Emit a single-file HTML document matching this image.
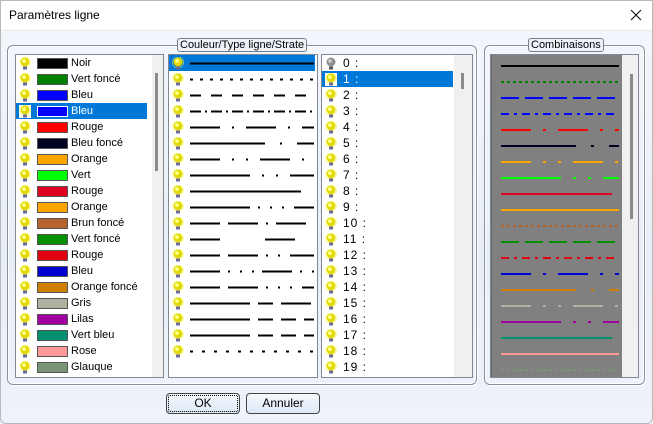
<!DOCTYPE html>
<html><head><meta charset="utf-8"><style>
*{margin:0;padding:0;box-sizing:border-box}
body{width:653px;height:424px;overflow:hidden;font-family:"Liberation Sans",sans-serif;font-size:11px;position:relative;background:linear-gradient(#f4f7fc 0,#e8eef8 60%,#eef2fa 100%)}
.abs{position:absolute}
#title{left:0;top:0;width:653px;height:31px;background:#fff;border-bottom:1px solid #e8e8e8}
.grp{border:1px solid #8a8f99;border-radius:6px;box-shadow:inset 0 0 0 1px #fff, 1px 1px 0 #fff}
.leg{background:#eef2fa;border:1px solid #7a7f88;border-radius:3px;padding:0 2px;height:14px;line-height:12px;font-size:11px;color:#000}
.list{background:#fff;border:1px solid #828790;overflow:hidden}
.sb{background:#f0f0f0}
.thumb{background:#8a8a8a;width:3px}
.row{position:absolute;left:0;height:16px;line-height:16px;white-space:nowrap}
.sel{background:#0078d7;color:#fff}
.sw{position:absolute;top:3px;width:31px;height:11px;border:1px solid #555}
.btn{border:1px solid #444;border-radius:4px;background:linear-gradient(#f6f9fd,#dde8f5);text-align:center;line-height:19px;font-size:12px}
.n{font-size:12px;letter-spacing:1px}
</style></head><body>
<svg width="0" height="0" style="position:absolute"><defs>
<g id="b"><circle cx="6" cy="5.5" r="5.5" fill="none" stroke="#ffff40" stroke-width="1" stroke-dasharray="1 1"/><circle cx="6" cy="5" r="4.5" fill="#e0d800"/><circle cx="5" cy="4" r="2" fill="#ffff80"/><rect x="4" y="9.5" width="4" height="3" fill="#6a6a9a"/></g>
<g id="g"><circle cx="6" cy="5" r="4.5" fill="#909090"/><circle cx="5" cy="4" r="1.8" fill="#d0d0d0"/><rect x="4" y="9.5" width="4" height="3" fill="#555"/></g>
</defs></svg>
<div id="title" class="abs"><div class="abs" style="left:9px;top:8px;font-size:12px">Paramètres ligne</div>
<svg class="abs" style="left:630px;top:9px" width="12" height="12"><path d="M1 1L11 11M11 1L1 11" stroke="#222" stroke-width="1.2"/></svg></div>
<div class="abs" style="left:0;top:0;width:653px;height:424px;border:1px solid #b8b8b8;border-radius:0 0 6px 6px;pointer-events:none"></div>

<div class="abs grp" style="left:7px;top:45px;width:470px;height:340px"></div>
<div class="abs leg" style="left:177px;top:38px">Couleur/Type ligne/Strate</div>
<div class="abs grp" style="left:484px;top:45px;width:161px;height:340px"></div>
<div class="abs leg" style="left:528px;top:38px">Combinaisons</div>

<div class="abs list" style="left:15px;top:54px;width:149px;height:324px">
<div class="abs sb" style="left:136px;top:0;width:12px;height:322px"><div class="abs thumb" style="left:3px;top:18px;height:98px"></div></div>
</div>
<div class="abs list" style="left:168px;top:54px;width:150px;height:324px"></div>
<div class="abs list" style="left:321px;top:54px;width:152px;height:324px">
<div class="abs sb" style="left:132px;top:0;width:18px;height:322px"><div class="abs thumb" style="left:7px;top:18px;height:16px"></div></div>
</div>
<div class="abs list" style="left:490px;top:54px;width:149px;height:324px;background:#f0f0f0">
<div class="abs" style="left:0;top:0;width:131px;height:322px;background:#808080;border-left:1px solid #666"></div>
<div class="abs thumb" style="left:139px;top:19px;height:145px"></div>
<svg id="cs" class="abs" style="left:0;top:0" width="131" height="322"></svg>
</div>

<div class="abs btn" style="left:166px;top:393px;width:74px;height:21px;outline:1px dotted #000;outline-offset:-3px">OK</div>
<div class="abs btn" style="left:246px;top:393px;width:74px;height:21px">Annuler</div>

<div class="abs" style="left:16px;top:55px;width:136px;height:322px;overflow:hidden">
<div class="row" style="top:0px;width:131px"><svg class="abs" style="left:3px;top:2px" width="12" height="13"><use href="#b"/></svg><span class="sw" style="left:21px;background:#000"></span><span class="abs" style="left:55px">Noir</span></div>
<div class="row" style="top:16px;width:131px"><svg class="abs" style="left:3px;top:2px" width="12" height="13"><use href="#b"/></svg><span class="sw" style="left:21px;background:#008000"></span><span class="abs" style="left:55px">Vert foncé</span></div>
<div class="row" style="top:32px;width:131px"><svg class="abs" style="left:3px;top:2px" width="12" height="13"><use href="#b"/></svg><span class="sw" style="left:21px;background:#0000ff"></span><span class="abs" style="left:55px">Bleu</span></div>
<div class="row sel" style="top:48px;width:131px"><svg class="abs" style="left:3px;top:2px;background:#fff" width="12" height="13"><use href="#b"/></svg><span class="sw" style="left:21px;background:#0000ff;border-color:#fff"></span><span class="abs" style="left:55px">Bleu</span></div>
<div class="row" style="top:64px;width:131px"><svg class="abs" style="left:3px;top:2px" width="12" height="13"><use href="#b"/></svg><span class="sw" style="left:21px;background:#ff0000"></span><span class="abs" style="left:55px">Rouge</span></div>
<div class="row" style="top:80px;width:131px"><svg class="abs" style="left:3px;top:2px" width="12" height="13"><use href="#b"/></svg><span class="sw" style="left:21px;background:#000020"></span><span class="abs" style="left:55px">Bleu foncé</span></div>
<div class="row" style="top:96px;width:131px"><svg class="abs" style="left:3px;top:2px" width="12" height="13"><use href="#b"/></svg><span class="sw" style="left:21px;background:#ffa500"></span><span class="abs" style="left:55px">Orange</span></div>
<div class="row" style="top:112px;width:131px"><svg class="abs" style="left:3px;top:2px" width="12" height="13"><use href="#b"/></svg><span class="sw" style="left:21px;background:#00ff00"></span><span class="abs" style="left:55px">Vert</span></div>
<div class="row" style="top:128px;width:131px"><svg class="abs" style="left:3px;top:2px" width="12" height="13"><use href="#b"/></svg><span class="sw" style="left:21px;background:#e00020"></span><span class="abs" style="left:55px">Rouge</span></div>
<div class="row" style="top:144px;width:131px"><svg class="abs" style="left:3px;top:2px" width="12" height="13"><use href="#b"/></svg><span class="sw" style="left:21px;background:#ffa500"></span><span class="abs" style="left:55px">Orange</span></div>
<div class="row" style="top:160px;width:131px"><svg class="abs" style="left:3px;top:2px" width="12" height="13"><use href="#b"/></svg><span class="sw" style="left:21px;background:#b4642c"></span><span class="abs" style="left:55px">Brun foncé</span></div>
<div class="row" style="top:176px;width:131px"><svg class="abs" style="left:3px;top:2px" width="12" height="13"><use href="#b"/></svg><span class="sw" style="left:21px;background:#009000"></span><span class="abs" style="left:55px">Vert foncé</span></div>
<div class="row" style="top:192px;width:131px"><svg class="abs" style="left:3px;top:2px" width="12" height="13"><use href="#b"/></svg><span class="sw" style="left:21px;background:#e00010"></span><span class="abs" style="left:55px">Rouge</span></div>
<div class="row" style="top:208px;width:131px"><svg class="abs" style="left:3px;top:2px" width="12" height="13"><use href="#b"/></svg><span class="sw" style="left:21px;background:#0000d0"></span><span class="abs" style="left:55px">Bleu</span></div>
<div class="row" style="top:224px;width:131px"><svg class="abs" style="left:3px;top:2px" width="12" height="13"><use href="#b"/></svg><span class="sw" style="left:21px;background:#d08000"></span><span class="abs" style="left:55px">Orange foncé</span></div>
<div class="row" style="top:240px;width:131px"><svg class="abs" style="left:3px;top:2px" width="12" height="13"><use href="#b"/></svg><span class="sw" style="left:21px;background:#b0b0a0"></span><span class="abs" style="left:55px">Gris</span></div>
<div class="row" style="top:256px;width:131px"><svg class="abs" style="left:3px;top:2px" width="12" height="13"><use href="#b"/></svg><span class="sw" style="left:21px;background:#a000a0"></span><span class="abs" style="left:55px">Lilas</span></div>
<div class="row" style="top:272px;width:131px"><svg class="abs" style="left:3px;top:2px" width="12" height="13"><use href="#b"/></svg><span class="sw" style="left:21px;background:#009070"></span><span class="abs" style="left:55px">Vert bleu</span></div>
<div class="row" style="top:288px;width:131px"><svg class="abs" style="left:3px;top:2px" width="12" height="13"><use href="#b"/></svg><span class="sw" style="left:21px;background:#ff9898"></span><span class="abs" style="left:55px">Rose</span></div>
<div class="row" style="top:304px;width:131px"><svg class="abs" style="left:3px;top:2px" width="12" height="13"><use href="#b"/></svg><span class="sw" style="left:21px;background:#7a9478"></span><span class="abs" style="left:55px">Glauque</span></div>
</div>

<div class="abs" style="left:322px;top:55px;width:131px;height:322px;overflow:hidden">
<div class="row" style="top:0;width:131px"><svg class="abs" style="left:3px;top:2px" width="12" height="13"><use href="#g"/></svg><span class="abs n" style="left:21px">0 :</span></div>
<div class="row sel" style="top:16px;width:131px"><svg class="abs" style="left:3px;top:2px;background:#fff" width="12" height="13"><use href="#b"/></svg><span class="abs n" style="left:21px">1 :</span></div>
<div class="row" style="top:32px"><svg class="abs" style="left:3px;top:2px" width="12" height="13"><use href="#b"/></svg><span class="abs n" style="left:21px">2 :</span></div>
<div class="row" style="top:48px"><svg class="abs" style="left:3px;top:2px" width="12" height="13"><use href="#b"/></svg><span class="abs n" style="left:21px">3 :</span></div>
<div class="row" style="top:64px"><svg class="abs" style="left:3px;top:2px" width="12" height="13"><use href="#b"/></svg><span class="abs n" style="left:21px">4 :</span></div>
<div class="row" style="top:80px"><svg class="abs" style="left:3px;top:2px" width="12" height="13"><use href="#b"/></svg><span class="abs n" style="left:21px">5 :</span></div>
<div class="row" style="top:96px"><svg class="abs" style="left:3px;top:2px" width="12" height="13"><use href="#b"/></svg><span class="abs n" style="left:21px">6 :</span></div>
<div class="row" style="top:112px"><svg class="abs" style="left:3px;top:2px" width="12" height="13"><use href="#b"/></svg><span class="abs n" style="left:21px">7 :</span></div>
<div class="row" style="top:128px"><svg class="abs" style="left:3px;top:2px" width="12" height="13"><use href="#b"/></svg><span class="abs n" style="left:21px">8 :</span></div>
<div class="row" style="top:144px"><svg class="abs" style="left:3px;top:2px" width="12" height="13"><use href="#b"/></svg><span class="abs n" style="left:21px">9 :</span></div>
<div class="row" style="top:160px"><svg class="abs" style="left:3px;top:2px" width="12" height="13"><use href="#b"/></svg><span class="abs n" style="left:21px">10 :</span></div>
<div class="row" style="top:176px"><svg class="abs" style="left:3px;top:2px" width="12" height="13"><use href="#b"/></svg><span class="abs n" style="left:21px">11 :</span></div>
<div class="row" style="top:192px"><svg class="abs" style="left:3px;top:2px" width="12" height="13"><use href="#b"/></svg><span class="abs n" style="left:21px">12 :</span></div>
<div class="row" style="top:208px"><svg class="abs" style="left:3px;top:2px" width="12" height="13"><use href="#b"/></svg><span class="abs n" style="left:21px">13 :</span></div>
<div class="row" style="top:224px"><svg class="abs" style="left:3px;top:2px" width="12" height="13"><use href="#b"/></svg><span class="abs n" style="left:21px">14 :</span></div>
<div class="row" style="top:240px"><svg class="abs" style="left:3px;top:2px" width="12" height="13"><use href="#b"/></svg><span class="abs n" style="left:21px">15 :</span></div>
<div class="row" style="top:256px"><svg class="abs" style="left:3px;top:2px" width="12" height="13"><use href="#b"/></svg><span class="abs n" style="left:21px">16 :</span></div>
<div class="row" style="top:272px"><svg class="abs" style="left:3px;top:2px" width="12" height="13"><use href="#b"/></svg><span class="abs n" style="left:21px">17 :</span></div>
<div class="row" style="top:288px"><svg class="abs" style="left:3px;top:2px" width="12" height="13"><use href="#b"/></svg><span class="abs n" style="left:21px">18 :</span></div>
<div class="row" style="top:304px"><svg class="abs" style="left:3px;top:2px" width="12" height="13"><use href="#b"/></svg><span class="abs n" style="left:21px">19 :</span></div>
</div>

<div class="abs" style="left:169px;top:55px;width:148px;height:322px;overflow:hidden">
<div class="abs sel" style="left:0;top:0;width:146px;height:16px"></div>
<svg id="ls" class="abs" style="left:0;top:0" width="148" height="322"></svg>
</div>

<script>
var P=[["none",124],["3 7",124],["11 10",124],["11 4 2 4",124],["30 12 2 12",124],["75 15 2 15",124],["30 12 2 12 2 12",124],["60 12 2 12 2 12",124],["none",111],["60 8 2 10 2 10 2 10",124],["30 8 30 8 2 8",124],["30 45",124],["30 8 30 8 2 10 2 10",124],["30 8 2 10 2 10 2 8",124],["30 8 30 8 2 10 2 10 2 10",124],["60 8 15 8 30 8",124],["60 8 15 8 15 8",124],["60 8 15 8 15 8",124],["3 9",124]];
var s="";
for(var i=0;i<19;i++){var y=i*16+8.5,p=P[i];
s+='<svg x="3" y="'+(i*16+2)+'" width="12" height="13"'+(i==0?' style="background:#fff"':'')+'><use href="#b"/></svg>';
s+='<line x1="21" x2="'+(21+p[1])+'" y1="'+y+'" y2="'+y+'" stroke="#000" stroke-width="2" stroke-dasharray="'+p[0]+'"/>';}
document.getElementById('ls').innerHTML=s;
var C=["#000","#008000","#0000ff","#0000ff","#ff0000","#000020","#ffa500","#00ff00","#e00020","#ffa500","#b4642c","#009000","#e00010","#0000d0","#d08000","#b0b0a0","#a000a0","#009070","#ff9898","#7a9478"];
var Q=[["none",118],["3 3",118],["18 6",118],["8 5 3 5",118],["30 12 3 12",118],["75 15 3 15",118],["30 12 3 12 3 12",118],["60 12 3 12 3 12",118],["none",111]];
s="";
for(var i=0;i<20;i++){var y=i*16+11,q=Q[i%9];
s+='<line x1="10" x2="'+(10+q[1])+'" y1="'+y+'" y2="'+y+'" stroke="'+C[i]+'" stroke-width="2" stroke-dasharray="'+q[0]+'"/>';}
document.getElementById('cs').innerHTML=s;
</script>
</body></html>
